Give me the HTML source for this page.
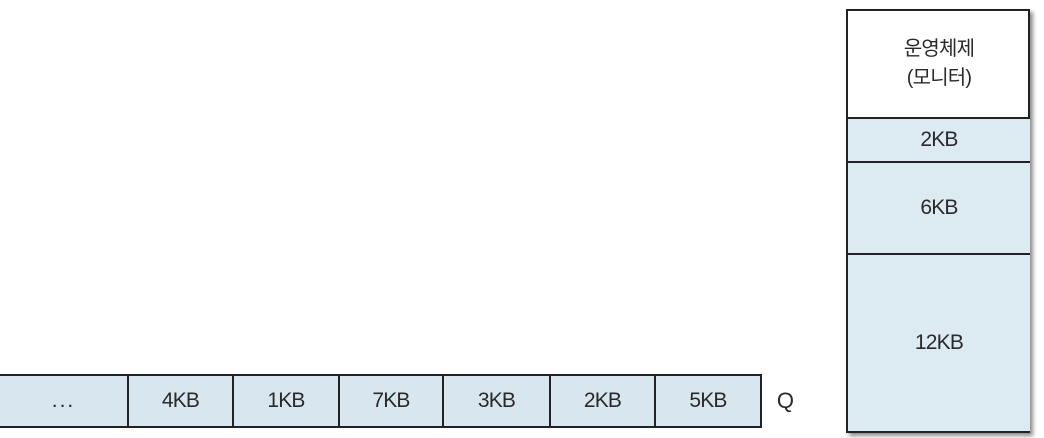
<!DOCTYPE html>
<html><head><meta charset="utf-8"><style>
body{margin:0;width:1044px;height:438px;background:#fff;position:relative;overflow:hidden;font-family:"Liberation Sans","Noto Sans CJK KR",sans-serif;color:#2a2a2a}
.c{position:absolute;display:flex;align-items:center;justify-content:center;font-size:21px;letter-spacing:-0.8px;box-sizing:border-box}
.q{top:374px;height:54px;background:#d7e6ef;border-top:2px solid #222;border-bottom:2px solid #222;border-right:2px solid #222}
.r{left:848px;width:182px;background:#dceaf1;border-bottom:2px solid #222}
</style></head><body>
<div class="c q" style="left:0;width:129px;letter-spacing:2px">...</div>
<div class="c q" style="left:129px;width:105px">4KB</div>
<div class="c q" style="left:234px;width:106px">1KB</div>
<div class="c q" style="left:340px;width:104px">7KB</div>
<div class="c q" style="left:444px;width:107px">3KB</div>
<div class="c q" style="left:551px;width:105px">2KB</div>
<div class="c q" style="left:656px;width:106px">5KB</div>
<div class="c" style="left:774px;top:374px;width:22px;height:54px;font-size:22px">Q</div>
<div style="position:absolute;left:846px;top:9px;width:184px;height:424px;border:2px solid #222;box-sizing:border-box;box-shadow:3px 3px 4px rgba(0,0,0,.45)"></div>
<div class="c" style="left:848px;top:11px;width:182px;height:108px;flex-direction:column;line-height:29px;border-bottom:2px solid #222;font-size:20px"><div>운영체제</div><div>(모니터)</div></div>
<div class="c r" style="top:119px;height:44px">2KB</div>
<div class="c r" style="top:163px;height:92px;align-items:flex-start;padding-top:33px">6KB</div>
<div class="c r" style="top:255px;height:176px;border-bottom:none">12KB</div>
</body></html>
